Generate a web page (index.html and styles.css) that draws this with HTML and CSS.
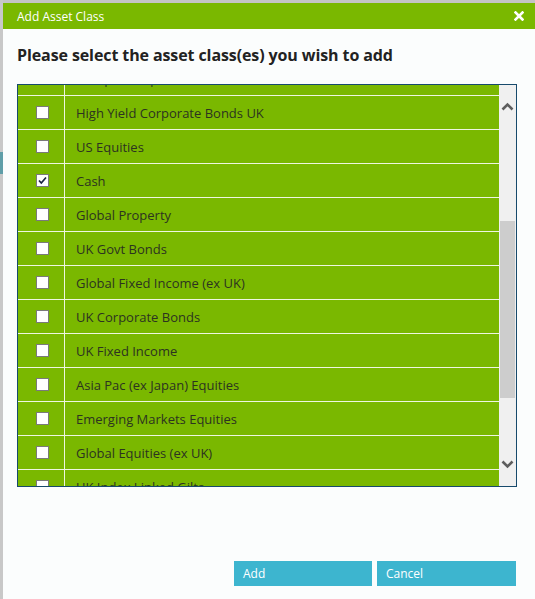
FILE: index.html
```html
<!DOCTYPE html>
<html>
<head>
<meta charset="utf-8">
<link rel="stylesheet" href="styles.css">
</head>
<body>
<div class="backdrop">
  <div class="backdrop-gap"></div>
  <div class="backdrop-teal"></div>
</div>
<div class="dialog">
  <div class="titlebar">
    <span class="title">Add Asset Class</span>
    <svg class="close" width="10" height="10" viewBox="0 0 10 10"><path d="M1.5 1.5 L8.5 8.5 M8.5 1.5 L1.5 8.5" stroke="#fff" stroke-width="2.6" stroke-linecap="square"/></svg>
  </div>
  <div class="content">
    <h1 class="heading">Please select the asset class(es) you wish to add</h1>
    <div class="listbox">
      <div class="viewport">
        <div class="rows">
          <div class="row"><div class="cell-check"><span class="box"></span></div><div class="cell-label">European Equities</div></div>
          <div class="row"><div class="cell-check"><span class="box"></span></div><div class="cell-label">High Yield Corporate Bonds UK</div></div>
          <div class="row"><div class="cell-check"><span class="box"></span></div><div class="cell-label">US Equities</div></div>
          <div class="row"><div class="cell-check"><span class="box"><svg width="11" height="11" viewBox="0 0 11 11"><path d="M2 5.5 L4.3 8 L9 2.5" fill="none" stroke="#1b2440" stroke-width="1.7"/></svg></span></div><div class="cell-label">Cash</div></div>
          <div class="row"><div class="cell-check"><span class="box"></span></div><div class="cell-label">Global Property</div></div>
          <div class="row"><div class="cell-check"><span class="box"></span></div><div class="cell-label">UK Govt Bonds</div></div>
          <div class="row"><div class="cell-check"><span class="box"></span></div><div class="cell-label">Global Fixed Income (ex UK)</div></div>
          <div class="row"><div class="cell-check"><span class="box"></span></div><div class="cell-label">UK Corporate Bonds</div></div>
          <div class="row"><div class="cell-check"><span class="box"></span></div><div class="cell-label">UK Fixed Income</div></div>
          <div class="row"><div class="cell-check"><span class="box"></span></div><div class="cell-label">Asia Pac (ex Japan) Equities</div></div>
          <div class="row"><div class="cell-check"><span class="box"></span></div><div class="cell-label">Emerging Markets Equities</div></div>
          <div class="row"><div class="cell-check"><span class="box"></span></div><div class="cell-label">Global Equities (ex UK)</div></div>
          <div class="row"><div class="cell-check"><span class="box"></span></div><div class="cell-label">UK Index Linked Gilts</div></div>
        </div>
      </div>
      <div class="scrollbar">
        <svg class="arrow" width="17" height="12" viewBox="0 0 17 12"><path d="M3.5 8.5 L8.5 3.5 L13.5 8.5" fill="none" stroke="#5e5e5e" stroke-width="2.6"/></svg>
        <div class="track">
          <div class="track-gap"></div>
          <div class="thumb"></div>
        </div>
        <svg class="arrow" width="17" height="12" viewBox="0 0 17 12"><path d="M3.5 3.5 L8.5 8.5 L13.5 3.5" fill="none" stroke="#5e5e5e" stroke-width="2.6"/></svg>
      </div>
    </div>
    <div class="footer">
      <button class="btn">Add</button>
      <button class="btn btn-cancel">Cancel</button>
    </div>
  </div>
</div>
</body>
</html>
```
FILE: styles.css
```css
html, body {
  margin: 0;
  padding: 0;
}
body {
  width: 535px;
  height: 599px;
  overflow: hidden;
  background: #c4c4c4;
  display: flex;
  font-family: "Open Sans", "Noto Sans", sans-serif;
}
.backdrop {
  width: 3px;
  flex: none;
  display: flex;
  flex-direction: column;
  background: #c8c8c8;
}
.backdrop-gap {
  height: 152px;
}
.backdrop-teal {
  height: 22px;
  background: #5f9ea8;
}
.dialog {
  flex: 1;
  margin-top: 3px;
  background: #fbfdfd;
  display: flex;
  flex-direction: column;
}
.titlebar {
  height: 26px;
  background: #7ab800;
  display: flex;
  align-items: center;
  justify-content: space-between;
  padding: 0 11px 0 14px;
}
.title {
  color: #fff;
  font-size: 12px;
}
.close {
  display: block;
}
.content {
  padding: 16px 18px 0 14px;
  display: flex;
  flex-direction: column;
}
.heading {
  margin: 0 0 19px 0;
  font-size: 16px;
  line-height: 20px;
  font-weight: 700;
  color: #222;
  letter-spacing: -0.1px;
}
.listbox {
  width: 498px;
  height: 401px;
  border: 1px solid #174a6c;
  display: flex;
}
.viewport {
  width: 481px;
  height: 401px;
  overflow: hidden;
  background: #7ab800;
}
.rows {
  margin-top: -23px;
}
.row {
  display: flex;
  height: 33px;
  border-bottom: 1px solid #eef6e0;
}
.cell-check {
  width: 47px;
  border-right: 1px solid #eef6e0;
  display: flex;
  align-items: center;
  justify-content: center;
  padding-left: 3px;
  box-sizing: border-box;
}
.box {
  width: 11px;
  height: 11px;
  background: #fff;
  border: 1px solid #7a7a7a;
  display: flex;
}
.box svg {
  display: block;
}
.cell-label {
  padding-left: 11px;
  display: flex;
  align-items: center;
  font-size: 13px;
  color: #2c3320;
}
.scrollbar {
  width: 17px;
  background: #f0f0f0;
  display: flex;
  flex-direction: column;
}
.arrow {
  display: block;
  margin-top: 16px;
}
.track {
  flex: 1;
  display: flex;
  flex-direction: column;
  align-items: center;
}
.track-gap {
  height: 108px;
}
.thumb {
  width: 15px;
  height: 177px;
  background: #cdcdcd;
}
.scrollbar .arrow:last-child {
  margin-top: 0;
  margin-bottom: 16px;
}
.footer {
  display: flex;
  justify-content: flex-end;
  gap: 5px;
  margin-top: 74px;
  margin-right: 1px;
}
.btn {
  width: 138px;
  height: 25px;
  border: 0;
  background: #3db5cf;
  color: #fff;
  font-family: "Open Sans", "Noto Sans", sans-serif;
  font-size: 12px;
  text-align: left;
  padding: 0 0 0 9px;
}
.btn-cancel {
  width: 139px;
}
```
